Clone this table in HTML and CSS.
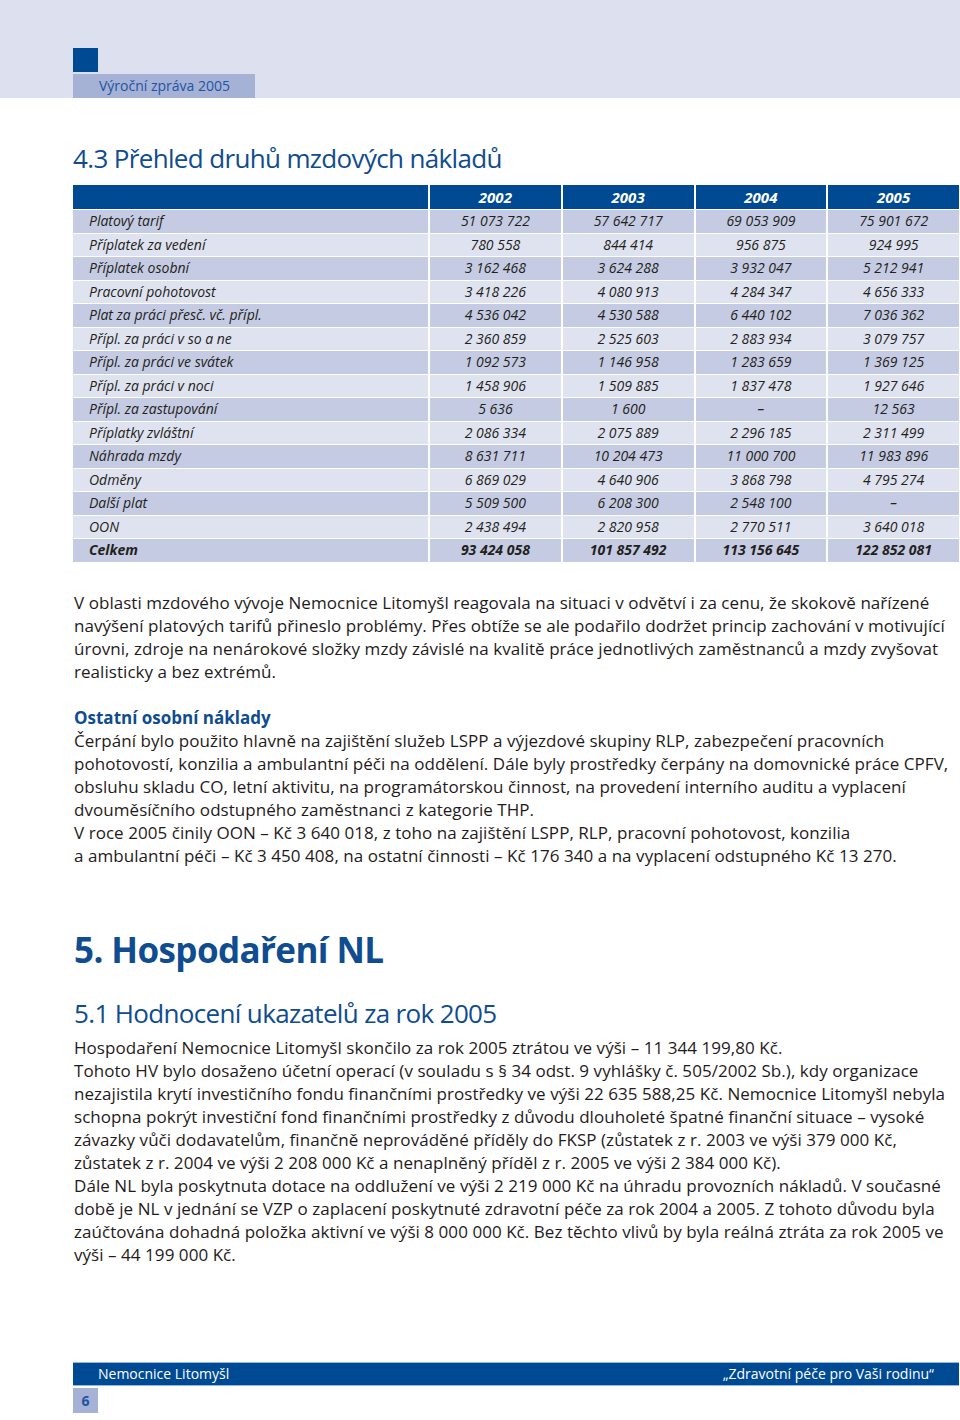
FILE: index.html
```html
<!DOCTYPE html>
<html lang="cs">
<head>
<meta charset="utf-8">
<title>Výroční zpráva 2005</title>
<link rel="stylesheet" href="styles.css">
</head>
<body>
<header class="band">
  <div class="mark"></div>
  <div class="label">Výroční zpráva 2005</div>
</header>

<main class="page">
  <h2 class="sub-title">4.3 Přehled druhů mzdových nákladů</h2>

  <table class="costs">
    <thead>
      <tr><th class="name"></th><th>2002</th><th>2003</th><th>2004</th><th>2005</th></tr>
    </thead>
    <tbody>
      <tr><td class="name">Platový tarif</td><td>51&nbsp;073&nbsp;722</td><td>57&nbsp;642&nbsp;717</td><td>69&nbsp;053&nbsp;909</td><td>75&nbsp;901&nbsp;672</td></tr>
      <tr><td class="name">Příplatek za vedení</td><td>780&nbsp;558</td><td>844&nbsp;414</td><td>956&nbsp;875</td><td>924&nbsp;995</td></tr>
      <tr><td class="name">Příplatek osobní</td><td>3&nbsp;162&nbsp;468</td><td>3&nbsp;624&nbsp;288</td><td>3&nbsp;932&nbsp;047</td><td>5&nbsp;212&nbsp;941</td></tr>
      <tr><td class="name">Pracovní pohotovost</td><td>3&nbsp;418&nbsp;226</td><td>4&nbsp;080&nbsp;913</td><td>4&nbsp;284&nbsp;347</td><td>4&nbsp;656&nbsp;333</td></tr>
      <tr><td class="name">Plat za práci přesč. vč. přípl.</td><td>4&nbsp;536&nbsp;042</td><td>4&nbsp;530&nbsp;588</td><td>6&nbsp;440&nbsp;102</td><td>7&nbsp;036&nbsp;362</td></tr>
      <tr><td class="name">Přípl. za práci v so a ne</td><td>2&nbsp;360&nbsp;859</td><td>2&nbsp;525&nbsp;603</td><td>2&nbsp;883&nbsp;934</td><td>3&nbsp;079&nbsp;757</td></tr>
      <tr><td class="name">Přípl. za práci ve svátek</td><td>1&nbsp;092&nbsp;573</td><td>1&nbsp;146&nbsp;958</td><td>1&nbsp;283&nbsp;659</td><td>1&nbsp;369&nbsp;125</td></tr>
      <tr><td class="name">Přípl. za práci v noci</td><td>1&nbsp;458&nbsp;906</td><td>1&nbsp;509&nbsp;885</td><td>1&nbsp;837&nbsp;478</td><td>1&nbsp;927&nbsp;646</td></tr>
      <tr><td class="name">Přípl. za zastupování</td><td>5&nbsp;636</td><td>1&nbsp;600</td><td>–</td><td>12&nbsp;563</td></tr>
      <tr><td class="name">Příplatky zvláštní</td><td>2&nbsp;086&nbsp;334</td><td>2&nbsp;075&nbsp;889</td><td>2&nbsp;296&nbsp;185</td><td>2&nbsp;311&nbsp;499</td></tr>
      <tr><td class="name">Náhrada mzdy</td><td>8&nbsp;631&nbsp;711</td><td>10&nbsp;204&nbsp;473</td><td>11&nbsp;000&nbsp;700</td><td>11&nbsp;983&nbsp;896</td></tr>
      <tr><td class="name">Odměny</td><td>6&nbsp;869&nbsp;029</td><td>4&nbsp;640&nbsp;906</td><td>3&nbsp;868&nbsp;798</td><td>4&nbsp;795&nbsp;274</td></tr>
      <tr><td class="name">Další plat</td><td>5&nbsp;509&nbsp;500</td><td>6&nbsp;208&nbsp;300</td><td>2&nbsp;548&nbsp;100</td><td>–</td></tr>
      <tr><td class="name">OON</td><td>2&nbsp;438&nbsp;494</td><td>2&nbsp;820&nbsp;958</td><td>2&nbsp;770&nbsp;511</td><td>3&nbsp;640&nbsp;018</td></tr>
      <tr class="total"><td class="name">Celkem</td><td>93&nbsp;424&nbsp;058</td><td>101&nbsp;857&nbsp;492</td><td>113&nbsp;156&nbsp;645</td><td>122&nbsp;852&nbsp;081</td></tr>
    </tbody>
  </table>

  <section class="text first">
    <p>V oblasti mzdového vývoje Nemocnice Litomyšl reagovala na situaci v&nbsp;odvětví i&nbsp;za cenu, že skokově nařízené navýšení platových tarifů přineslo problémy. Přes obtíže se ale podařilo dodržet princip zachování v&nbsp;motivující úrovni, zdroje na nenárokové složky mzdy závislé na kvalitě práce jednotlivých zaměstnanců a&nbsp;mzdy zvyšovat realisticky a&nbsp;bez extrémů.</p>
  </section>

  <section class="text">
    <h3 class="lead">Ostatní osobní náklady</h3>
    <p>Čerpání bylo použito hlavně na zajištění služeb LSPP a&nbsp;výjezdové skupiny RLP, zabezpečení pracovních pohotovostí, konzilia a&nbsp;ambulantní péči na oddělení. Dále byly prostředky čerpány na domovnické práce CPFV, obsluhu skladu CO, letní aktivitu, na programátorskou činnost, na provedení interního auditu a&nbsp;vyplacení dvouměsíčního odstupného zaměstnanci z&nbsp;kategorie THP.</p>
    <p>V roce 2005 činily OON – Kč 3&nbsp;640&nbsp;018, z&nbsp;toho na zajištění LSPP, RLP, pracovní pohotovost, konzilia a&nbsp;ambulantní péči – Kč 3&nbsp;450&nbsp;408, na ostatní činnosti – Kč 176&nbsp;340 a&nbsp;na vyplacení odstupného Kč 13&nbsp;270.</p>
  </section>

  <h1 class="chapter">5. Hospodaření NL</h1>
  <h2 class="sub-title second">5.1 Hodnocení ukazatelů za rok 2005</h2>

  <section class="text">
    <p>Hospodaření Nemocnice Litomyšl skončilo za rok 2005 ztrátou ve výši – 11&nbsp;344&nbsp;199,80 Kč.</p>
    <p>Tohoto HV bylo dosaženo účetní operací (v&nbsp;souladu s&nbsp;§&nbsp;34 odst. 9 vyhlášky č.&nbsp;505/2002 Sb.), kdy organizace nezajistila krytí investičního fondu finančními prostředky ve výši 22&nbsp;635&nbsp;588,25 Kč. Nemocnice Litomyšl nebyla schopna pokrýt investiční fond finančními prostředky z&nbsp;důvodu dlouholeté špatné finanční situace – vysoké závazky vůči dodavatelům, finančně neprováděné příděly do FKSP (zůstatek z&nbsp;r.&nbsp;2003 ve výši 379&nbsp;000 Kč, zůstatek z&nbsp;r.&nbsp;2004 ve výši 2&nbsp;208&nbsp;000 Kč a&nbsp;nenaplněný příděl z&nbsp;r.&nbsp;2005 ve výši 2&nbsp;384&nbsp;000 Kč).</p>
    <p>Dále NL byla poskytnuta dotace na oddlužení ve výši 2&nbsp;219&nbsp;000 Kč na úhradu provozních nákladů. V&nbsp;současné době je NL v&nbsp;jednání se VZP o&nbsp;zaplacení poskytnuté zdravotní péče za rok 2004 a&nbsp;2005. Z&nbsp;tohoto důvodu byla zaúčtována dohadná položka aktivní ve výši 8&nbsp;000&nbsp;000 Kč. Bez těchto vlivů by byla reálná ztráta za rok 2005 ve výši – 44&nbsp;199&nbsp;000 Kč.</p>
  </section>
</main>

<footer class="foot">
  <div class="foot-bar">
    <span>Nemocnice Litomyšl</span>
    <span>„Zdravotní péče pro Vaši rodinu“</span>
  </div>
  <div class="page-no">6</div>
</footer>
</body>
</html>
```

FILE: styles.css
```css
* { box-sizing: border-box; }

body {
  display: flex;
  flex-direction: column;
  min-height: 1420px;
  margin: 0;
  background: #ffffff;
  color: #1f1b1c;
  font-family: "Open Sans", "Noto Sans", sans-serif;
}

/* top band */
.band {
  height: 98px;
  padding: 48px 0 0 73px;
  background: #dde0ee;
}
.mark {
  width: 25px;
  height: 24px;
  background: #004a93;
}
.label {
  width: 182px;
  height: 24px;
  margin-top: 2px;
  padding-left: 26px;
  background: #a6b1d6;
  color: #1d55a3;
  font-size: 14px;
  line-height: 24px;
}

/* page content */
.page {
  width: 960px;
  padding: 0 0 0 74px;
}

.sub-title {
  margin: 44px 0 11px -1px;
  color: #0f4c90;
  font-size: 26px;
  font-weight: 400;
  line-height: 32px;
  letter-spacing: -0.65px;
}
.sub-title.second {
  margin: 25px 0 7px;
}

/* table */
.costs {
  width: 886px;
  margin-left: -1px;
  border-collapse: separate;
  border-spacing: 0;
  table-layout: fixed;
  font-size: 14px;
  font-style: italic;
}
.costs th,
.costs td {
  padding: 0;
  text-align: center;
  border-left: 2px solid #ffffff;
  white-space: nowrap;
}
.costs th:first-child,
.costs td:first-child {
  border-left: 0;
}
.costs .name {
  width: 355px;
  padding-left: 16px;
  text-align: left;
}
.costs th {
  height: 24px;
  background: #004a93;
  color: #ffffff;
  font-size: 15px;
  font-weight: 700;
  line-height: 22px;
}
.costs td {
  height: 23.5px;
  line-height: 22px;
  border-top: 1px solid #ffffff;
  color: #231f20;
}
.costs tbody tr:nth-child(odd) td { background: #c5cbe2; }
.costs tbody tr:nth-child(even) td { background: #dfe2ef; }
.costs .total td { font-weight: 700; }

/* running text */
.text p,
.text .lead {
  margin: 0;
  font-size: 17px;
  line-height: 23px;
  letter-spacing: 0.05px;
}
.text.first {
  margin-top: 29px;
  margin-bottom: 23px;
}
.text .lead {
  color: #0f4c90;
  font-weight: 700;
  letter-spacing: 0;
}

.chapter {
  margin: 61px 0 0;
  color: #0f4c90;
  font-size: 35px;
  font-weight: 700;
  line-height: 44px;
  letter-spacing: -0.6px;
}

/* footer */
.foot {
  margin-top: auto;
  padding: 0 0 7px 73px;
}
.foot-bar {
  display: flex;
  justify-content: space-between;
  width: 886px;
  height: 24px;
  padding: 0 25px;
  background: #004a93;
  border-top: 1px solid #8fb8e4;
  border-bottom: 1px solid #8fb8e4;
  color: #ffffff;
  font-size: 14px;
  line-height: 22px;
}
.page-no {
  width: 25px;
  height: 25px;
  margin-top: 2px;
  background: #a6b1d6;
  color: #1d55a3;
  font-size: 14px;
  font-weight: 700;
  line-height: 25px;
  text-align: center;
}
```
